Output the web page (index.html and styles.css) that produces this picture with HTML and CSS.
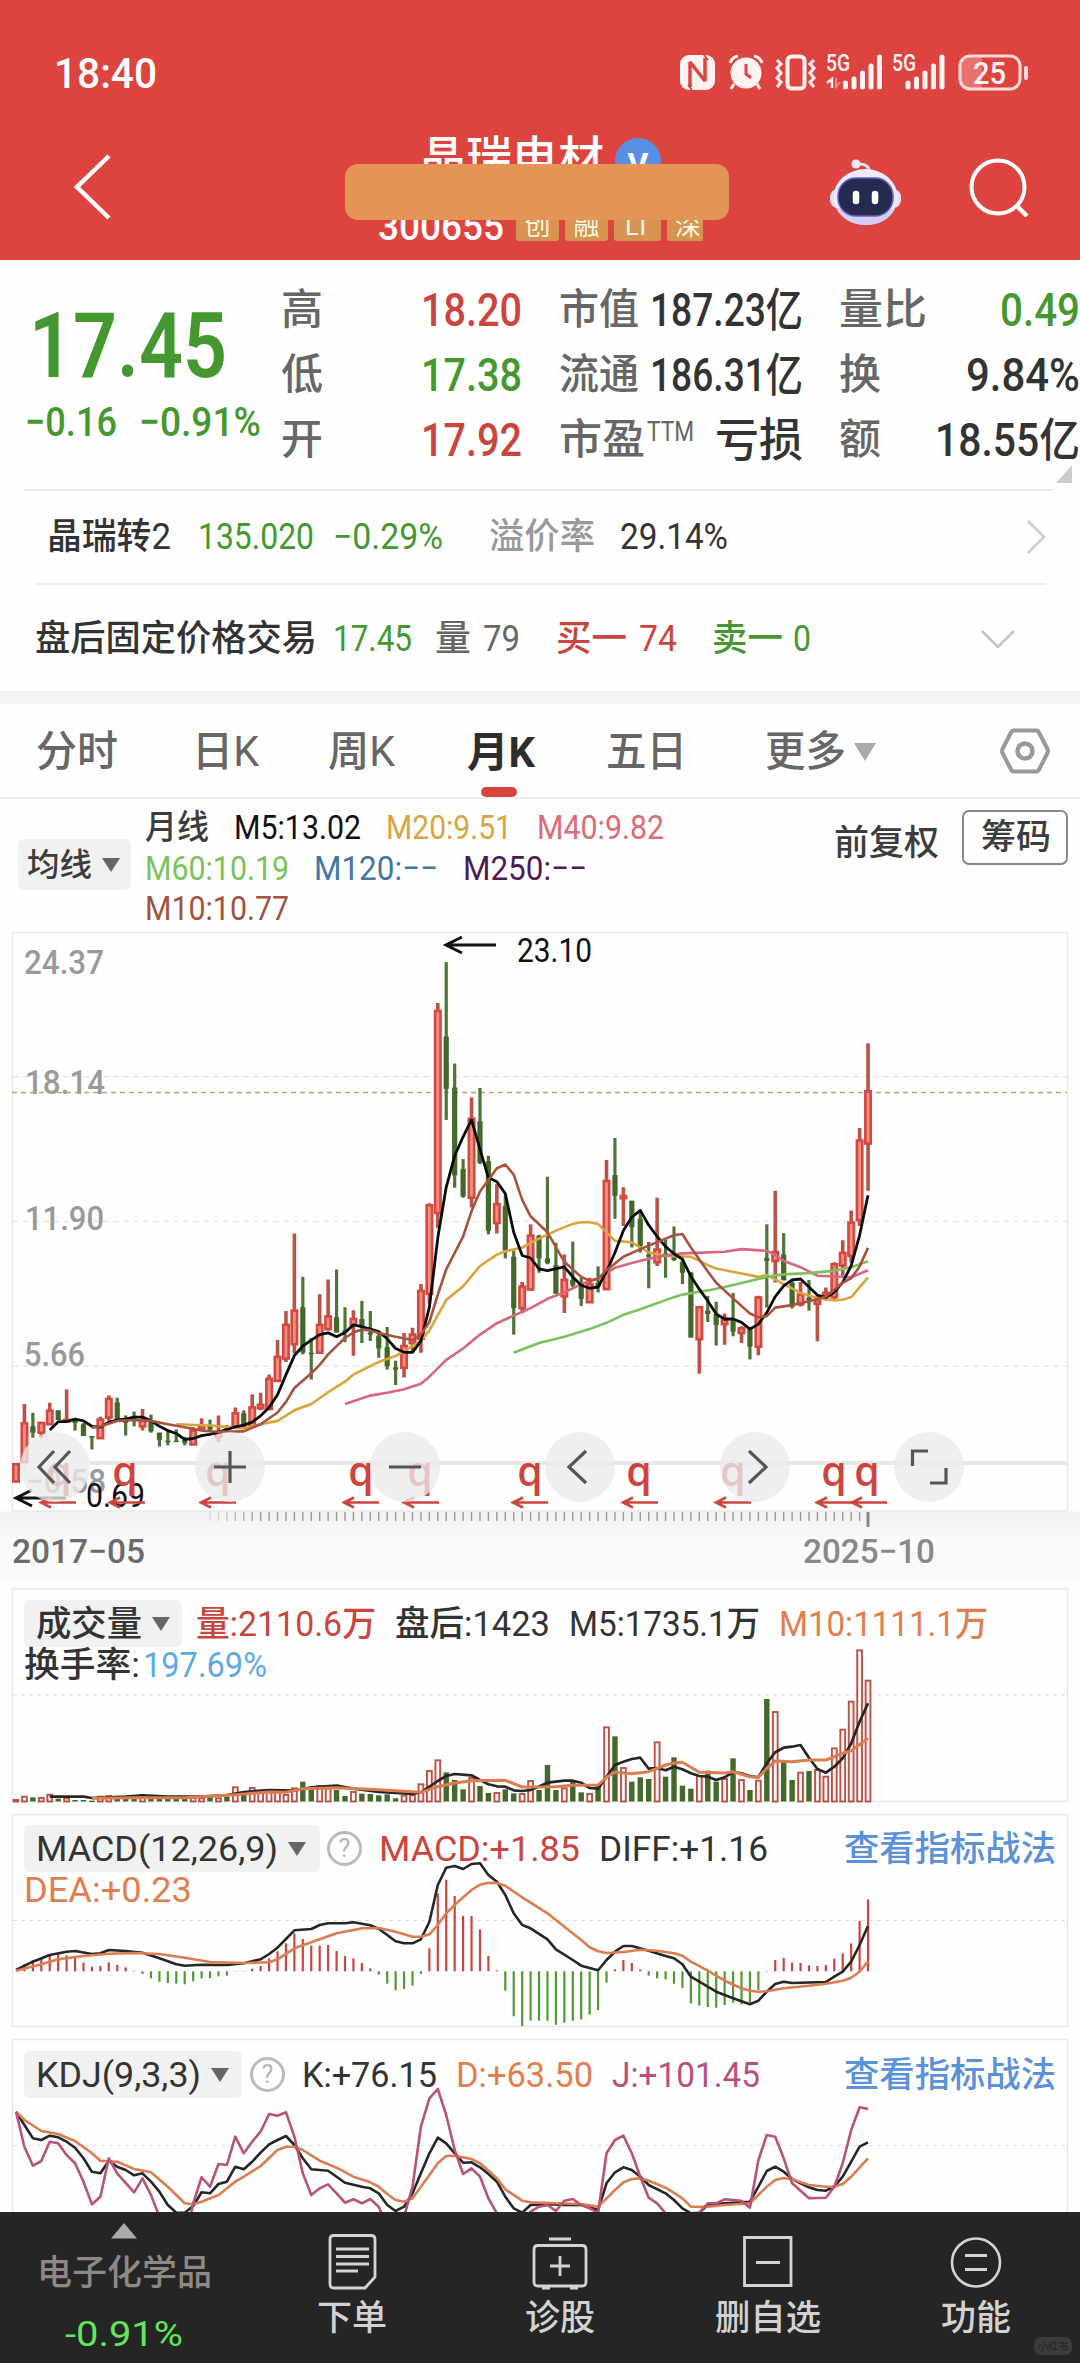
FILE: index.html
```html
<!DOCTYPE html>
<html lang="zh-CN">
<head>
<meta charset="utf-8">
<title>晶瑞电材 300655</title>
<link rel="stylesheet" href="styles.css">
</head>
<body>
<header class="top">
  <div class="status">
    <span class="fit clock" data-w="103">18:40</span>
    <svg class="status-icons" width="370" height="50" viewBox="0 0 370 50">
      <rect x="10" y="8" width="35" height="35" rx="9" fill="#fff3f1"/>
      <path d="M20 40V15L35 34V11" fill="none" stroke="#dd4440" stroke-width="3.500" stroke-linejoin="bevel"/>
      <path d="M22 43L18 38M34 8l4 5" stroke="#dd4440" stroke-width="2"/>
      <circle cx="76" cy="26" r="15.500" fill="#fff3f1"/>
      <path d="M60 16q2-6 8-7M84 9q6 1 8 7M64 37l-3 5M87 37l3 5" fill="none" stroke="#fff3f1" stroke-width="3"/>
      <path d="M76 17v10l5 4" fill="none" stroke="#dd4440" stroke-width="3"/>
      <rect x="117.500" y="9.500" width="17" height="32" rx="4" fill="none" stroke="#fff3f1" stroke-width="4"/>
      <path d="M107 13l4 4-4 4 4 5-4 5 4 4-4 5M144 13l-4 4 4 4-4 5 4 5-4 4 4 5" fill="none" stroke="#fff3f1" stroke-width="3"/>
      <text x="156" y="24" class="net" textLength="24" lengthAdjust="spacingAndGlyphs">5G</text>
      <path d="M157 36l5-4v9" fill="none" stroke="#fff3f1" stroke-width="2.500"/>
      <path d="M166 31v9l4-5" fill="none" stroke="#ea8d88" stroke-width="2"/>
      <path d="M175.500 40v-4M184 40V32M192.500 40V26M201 40V19M209.500 40V10" stroke="#fff3f1" stroke-width="5" stroke-linecap="round"/>
      <text x="222" y="24" class="net" textLength="24" lengthAdjust="spacingAndGlyphs">5G</text>
      <path d="M238 40v-4M246.500 40V32M255 40V26M263.500 40V19M272 40V10" stroke="#fff3f1" stroke-width="5" stroke-linecap="round"/>
      <path d="M312 9h-13a9 9 0 0 0-9 9v14a9 9 0 0 0 9 9h13z" fill="#e8726e"/>
      <rect x="290" y="9" width="60" height="33" rx="10" fill="none" stroke="#ffdcd9" stroke-width="3"/>
      <path d="M356 21v10" stroke="#ffdcd9" stroke-width="4" stroke-linecap="round"/>
      <text x="303" y="36.500" class="charge" textLength="33" lengthAdjust="spacingAndGlyphs">25</text>
    </svg>
  </div>
  <div class="titlebar">
    <svg class="back" width="60" height="80" viewBox="0 0 60 80"><path d="M41 9L9 40l32 31" fill="none" stroke="#fff" stroke-width="4.500"/></svg>
    <div class="stock">
      <div class="name"><span class="fit" data-w="184">晶瑞电材</span><i class="vip">V</i></div>
      <div class="code"><span class="fit num" data-w="126">300655</span><i>创</i><i>融</i><i class="wide">LT</i><i class="cut">深</i></div>
      <div class="mask"></div>
    </div>
    <svg class="robot" width="80" height="80" viewBox="0 0 80 80">
      <path d="M46 20q0-9-12-8" fill="none" stroke="#ece6f5" stroke-width="3"/><circle cx="33" cy="12" r="4.500" fill="#ece6f5"/>
      <rect x="7" y="37" width="71" height="19" rx="8" fill="#e5e0f6"/>
      <ellipse cx="42.500" cy="45" rx="32" ry="28" fill="#eeeafa"/>
      <path d="M14 57q9 16 29 16t29-16z" fill="#d3cdf0"/>
      <rect x="15" y="26" width="55" height="38" rx="18" fill="#252b4f" stroke="#6a5bc4" stroke-width="1.500"/>
      <path d="M33 42v7M52 42v7" stroke="#fff" stroke-width="6.500" stroke-linecap="round"/>
    </svg>
    <svg class="search" width="66" height="66" viewBox="0 0 66 66"><circle cx="31" cy="31" r="26.500" fill="none" stroke="#fff" stroke-width="4"/><path d="M49 49l11 11" stroke="#fff" stroke-width="4.500"/></svg>
  </div>
</header>

<section class="quote">
  <div class="price">
    <span class="fit big" data-w="198">17.45</span>
    <div class="chg"><span class="fit" data-w="92">−0.16</span><span class="fit" data-w="122">−0.91%</span></div>
  </div>
  <dl class="facts">
    <dt><span class="fit" data-w="42">高</span></dt><dd class="up"><span class="fit" data-w="101">18.20</span></dd>
    <dt><span class="fit" data-w="80">市值</span></dt><dd><span class="fit" data-w="153">187.23亿</span></dd>
    <dt><span class="fit" data-w="88">量比</span></dt><dd class="down"><span class="fit" data-w="80">0.49</span></dd>
    <dt><span class="fit" data-w="42">低</span></dt><dd class="down"><span class="fit" data-w="101">17.38</span></dd>
    <dt><span class="fit" data-w="80">流通</span></dt><dd><span class="fit" data-w="153">186.31亿</span></dd>
    <dt><span class="fit" data-w="42">换</span></dt><dd><span class="fit" data-w="114">9.84%</span></dd>
    <dt><span class="fit" data-w="42">开</span></dt><dd class="up"><span class="fit" data-w="101">17.92</span></dd>
    <dt><span class="fit" data-w="86">市盈</span><span class="fit ttm" data-w="47">TTM</span></dt><dd><span class="fit" data-w="88">亏损</span></dd>
    <dt><span class="fit" data-w="42">额</span></dt><dd><span class="fit" data-w="145">18.55亿</span></dd>
  </dl>
</section>
<div class="corner"><svg width="16" height="18" viewBox="0 0 16 18"><path d="M16 0v18H0z" fill="#ccc"/></svg></div>

<section class="line bond">
  <span class="fit" data-w="124">晶瑞转2</span><span class="fit down" data-w="116">135.020</span><span class="fit down" data-w="110">−0.29%</span><span class="fit pale" data-w="106">溢价率</span><span class="fit" data-w="108">29.14%</span>
  <svg width="20" height="36" viewBox="0 0 20 36"><path d="M2 2l16 16L2 34" fill="none" stroke="#ccc" stroke-width="2.500"/></svg>
</section>
<section class="line after">
  <span class="fit" data-w="282">盘后固定价格交易</span><span class="fit down" data-w="79">17.45</span><span class="fit grey" data-w="36">量</span><span class="fit grey" data-w="37">79</span><span class="fit up" data-w="71">买一</span><span class="fit up" data-w="38">74</span><span class="fit down" data-w="71">卖一</span><span class="fit down" data-w="18">0</span>
  <svg width="36" height="20" viewBox="0 0 36 20"><path d="M2 2l16 16L34 2" fill="none" stroke="#c4c4c4" stroke-width="2.500"/></svg>
</section>
<div class="band"></div>

<nav class="tabs">
  <a><span class="fit" data-w="82">分时</span></a><a><span class="fit" data-w="67">日K</span></a><a><span class="fit" data-w="67">周K</span></a><a class="on"><span class="fit" data-w="68">月K</span></a><a><span class="fit" data-w="81">五日</span></a><a><span class="fit" data-w="81">更多</span><svg width="22" height="20" viewBox="0 0 22 20"><path d="M0 1h22L11 19z" fill="#aaa"/></svg></a>
  <svg width="52" height="48" viewBox="0 0 52 48"><path d="M15 3.500h22q2 0 3 2L48.500 22q1 2 0 4L40 42.500q-1 2-3 2H15q-2 0-3-2L3.500 26q-1-2 0-4L12 5.500q1-2 3-2z" fill="none" stroke="#999" stroke-width="4"/><circle cx="26" cy="24" r="7.500" fill="none" stroke="#999" stroke-width="4.500"/></svg>
</nav>

<section class="ma">
  <div class="pill"><span class="fit" data-w="65">均线</span><i class="tri"></i></div>
  <div class="legend">
    <div><span class="fit" data-w="64">月线</span><span class="fit k" data-w="127">M5:13.02</span><span class="fit y" data-w="126">M20:9.51</span><span class="fit p" data-w="127">M40:9.82</span></div>
    <div><span class="fit g" data-w="144">M60:10.19</span><span class="fit b" data-w="124">M120:−−</span><span class="fit v" data-w="124">M250:−−</span></div>
    <div><span class="fit r" data-w="144">M10:10.77</span></div>
  </div>
  <span class="fit adj" data-w="105">前复权</span>
  <button><span class="fit" data-w="70">筹码</span></button>
</section>

<section class="chart"><svg id="kline" width="1080" height="650" viewBox="0 0 1080 650"></svg></section>

<section class="panel vol">
  <svg id="volume" width="1080" height="230" viewBox="0 0 1080 230"></svg>
  <div class="info">
    <div class="row"><div class="pill"><span class="fit" data-w="106">成交量</span><i class="tri"></i></div><span class="fit up" data-w="180">量:2110.6万</span><span class="fit" data-w="155">盘后:1423</span><span class="fit" data-w="191">M5:1735.1万</span><span class="fit o" data-w="209">M10:1111.1万</span></div>
    <div class="row2"><span class="fit" data-w="116">换手率:</span><span class="fit sky" data-w="124">197.69%</span></div>
  </div>
</section>
<section class="panel macd">
  <svg id="macd" width="1080" height="220" viewBox="0 0 1080 220"></svg>
  <div class="info">
    <div class="row"><div class="pill"><span class="fit" data-w="242">MACD(12,26,9)</span><i class="tri"></i></div><i class="help">?</i><span class="fit up" data-w="201">MACD:+1.85</span><span class="fit" data-w="169">DIFF:+1.16</span><a class="fit link" data-w="212">查看指标战法</a></div>
    <div class="row2"><span class="fit o" data-w="168">DEA:+0.23</span></div>
  </div>
</section>
<section class="panel kdj">
  <svg id="kdj" width="1080" height="182" viewBox="0 0 1080 182"></svg>
  <div class="info">
    <div class="row"><div class="pill"><span class="fit" data-w="165">KDJ(9,3,3)</span><i class="tri"></i></div><i class="help">?</i><span class="fit" data-w="135">K:+76.15</span><span class="fit o" data-w="137">D:+63.50</span><span class="fit m" data-w="148">J:+101.45</span><a class="fit link" data-w="212">查看指标战法</a></div>
  </div>
</section>

<footer class="dock">
  <div class="sector"><svg width="28" height="16" viewBox="0 0 28 16"><path d="M14 0l13 15.500H1z" fill="#aaa"/></svg><span class="fit" data-w="175">电子化学品</span><span class="fit pct" data-w="118">-0.91%</span></div>
  <div class="act"><svg width="60" height="58" viewBox="0 0 60 58"><path d="M12 3.500h37q4 0 4 4V45l-10 11H12q-4 0-4-4V7.500q0-4 4-4zM14 17h33M14 24.500h33M14 32h33M14 39h22" fill="none" stroke="#d4d4d4" stroke-width="2.800"/></svg><span class="fit" data-w="70">下单</span></div>
  <div class="act"><svg width="60" height="58" viewBox="0 0 60 58"><path d="M8 13.500h44q4 0 4 4V50q0 4-4 4H8q-4 0-4-4V17.500q0-4 4-4zM19 7h22M12 56h8M40 56h8M30 24v20M20 34h20" fill="none" stroke="#d4d4d4" stroke-width="2.800"/></svg><span class="fit" data-w="70">诊股</span></div>
  <div class="act"><svg width="60" height="58" viewBox="0 0 60 58"><path d="M6.500 5.500h46.500v48H6.500zM18 30.500h24" fill="none" stroke="#d4d4d4" stroke-width="2.800"/></svg><span class="fit" data-w="106">删自选</span></div>
  <div class="act"><svg width="60" height="58" viewBox="0 0 60 58"><circle cx="30" cy="30.500" r="24" fill="none" stroke="#d4d4d4" stroke-width="2.600"/><path d="M19 23.500h22M19 37.500h22" stroke="#d4d4d4" stroke-width="2.800"/></svg><span class="fit" data-w="70">功能</span></div>
  <i class="mark">小红书</i>
</footer>
<script src="app.js"></script>
</body>
</html>
```
FILE: styles.css
```css
* { box-sizing: border-box; }
body { margin: 0; width: 1080px; height: 2363px; overflow: hidden; background: #fefefe; color: #333; font-family: Roboto, "Noto Sans CJK SC", sans-serif; font-size: 35px; font-weight: 450; line-height: 1; }
i { font-style: normal; }
svg { display: block; flex: none; }
.fit { display: inline-block; white-space: nowrap; transform-origin: 0 50%; flex: none; justify-self: start; }
.up { color: #c9453e; }
.down { color: #459830; }
.grey { color: #666; }
.pale { color: #999; }

.top { height: 260px; background: #dd4440; color: #fff; overflow: hidden; }
.status { height: 96px; padding: 47px 0 0 54px; display: flex; align-items: flex-start; }
.clock { font-size: 42px; font-weight: 500; line-height: 53px; }
.status-icons { margin-left: 513px; }
.net { font: 500 23px Roboto, sans-serif; fill: #fff3f1; }
.charge { font: 500 32px Roboto, sans-serif; fill: #fff3f1; }
.titlebar { height: 164px; display: grid; grid-template-columns: 68px 277px 384px 94px 144px 1fr; align-items: start; }
.back { grid-column: 2; margin-top: 51px; }
.stock { grid-column: 3; height: 164px; display: grid; grid-template-rows: 68px 77px; }
.name { grid-area: 1 / 1; display: flex; align-items: center; padding: 33px 0 0 75px; height: 90px; font-size: 46px; font-weight: 500; }
.vip { width: 46px; height: 46px; border-radius: 50%; margin-left: 11px; margin-top: 6px; background: #588fe5; font: 700 32px/52px Roboto, sans-serif; text-align: center; }
.code { grid-area: 2 / 1; align-self: end; display: flex; align-items: flex-end; padding-left: 33px; height: 50px; font-size: 38px; font-weight: 500; }
.code .fit { margin-right: 12px; line-height: 28px; }
.code i { width: 43px; height: 34px; margin-right: 6px; border-radius: 3px; background: #d79350; color: #fff8e0; font: 26px/34px "Noto Sans CJK SC", sans-serif; text-align: center; }
.code i.wide { width: 47px; }
.code i.cut { width: 36px; overflow: hidden; padding-left: 8px; border-radius: 3px 0 0 3px; text-align: left; }
.mask { grid-area: 1 / 1 / 3 / 2; z-index: 1; align-self: start; margin-top: 68px; height: 56px; border-radius: 13px; background: #e39556; }
.robot { grid-column: 5; margin-top: 56px; }
.search { grid-column: 6; margin-top: 60px; }

.quote { height: 205px; display: grid; grid-template-columns: 281px 799px; }
.price { padding-top: 41px; color: #459830; }
.big { display: block; margin-left: 29px; font-size: 91px; font-weight: 600; line-height: 90px; }
.chg { display: flex; gap: 22px; margin: 9px 0 0 25px; font-size: 41px; font-weight: 500; line-height: 44px; }
.facts { margin: 0; padding-top: 17px; display: grid; grid-template-columns: 100px 141px 174px 107px 96px 181px; grid-auto-rows: 65px; align-items: center; }
.facts dt { color: #666; font-size: 42px; display: flex; }
.facts dd { margin: 0; font-size: 46px; font-weight: 500; line-height: 60px; display: flex; justify-content: flex-end; }
.facts dt:nth-of-type(3n+2) { padding-left: 37px; }
.facts dt:nth-of-type(3n) { padding-left: 36px; }
.facts .ttm { font-size: 27px; font-weight: 400; margin-left: 2px; }
.corner { height: 26px; border-bottom: 2px solid #eaeaea; margin: 0 27px 0 24px; display: flex; justify-content: flex-end; }
.corner svg { margin-right: -19px; }

.line { font-size: 36px; align-items: center; }
.bond { display: grid; height: 94px; margin: 0 34px 0 36px; padding-left: 11px; border-bottom: 2px solid #eee; grid-template-columns: 151px 135px 156px 131px 1fr 20px; }
.after { display: grid; height: 106px; padding: 2px 0 0 35px; grid-template-columns: 298px 102px 48px 73px 83px 73px 81px 187px 1fr; }
.band { height: 13px; background: #f4f4f4; }

.tabs { height: 95px; border-bottom: 2px solid #eee; display: grid; grid-template-columns: 156px 136px 139px 139px 159px 234px 1fr; padding: 0 0 0 36px; align-items: center; color: #666; font-size: 42px; }
.tabs a { height: 93px; padding-top: 2px; display: flex; align-items: center; gap: 8px; }
.tabs .on { color: #2d2d2d; font-weight: 700; display: grid; grid-template-rows: 81px 10px; gap: 0; }
.tabs .on .fit { margin-top: 12px; }
.tabs .on::after { content: ""; width: 36px; height: 10px; margin-left: 14px; border-radius: 5px; background: #d5443d; }

.pill { background: #f1f1f1; border-radius: 6px; display: flex; align-items: center; flex: none; }
.tri { width: 0; height: 0; border: solid transparent; border-width: 14px 9px 0; border-top-color: #666; margin-left: 10px; }
.ma { height: 131px; display: grid; grid-template-columns: 18px 113px 14px 689px 128px 106px; color: #3c3c3c; }
.ma > .pill { grid-column: 2; height: 51px; margin-top: 40px; padding-left: 9px; font-size: 32px; }
.legend { grid-column: 4; padding-top: 8px; font-size: 34px; line-height: 40.500px; }
.legend div { display: flex; gap: 25px; height: 40.500px; }
.k { color: #111; }
.y { color: #d8a540; }
.p { color: #dc6a78; }
.g { color: #7bc25d; }
.b { color: #4176a6; }
.v { color: #4a1b58; }
.r { color: #a2523f; }
.o { color: #e07f4d; }
.m { color: #b94f7a; }
.sky { color: #5fa9e2; }
.adj { margin-top: 27px; }
.ma button { height: 55px; margin-top: 11px; padding: 0 0 0 17px; text-align: left; border: 2px solid #888; border-radius: 7px; background: none; font: inherit; color: inherit; }

.chart { height: 650px; background: linear-gradient(#fefefe 581px, #f2f2f2 582px, #fafafa 610px); }
.panel { display: grid; }
.panel > * { grid-area: 1 / 1; }
.vol { height: 230px; }
.macd { height: 220px; }
.kdj { height: 182px; overflow: hidden; }
.info { padding: 15px 24px 0 24px; }
.vol .info { padding-top: 20px; }
.kdj .info { padding-top: 21px; }
.row { height: 47px; display: flex; align-items: center; }
.row .pill { height: 47px; width: 158px; padding-left: 12px; margin-right: 14px; }
.row .fit { margin: 2px 19px 0 0; }
.row .pill .fit { margin-right: 0; }
.macd .pill { width: 296px; margin-right: 7px; }
.kdj .pill { width: 218px; margin-right: 8px; }
.help { width: 35px; height: 35px; border: 3px solid #bbb; border-radius: 50%; color: #b5b5b5; font: 25px/30px Roboto, sans-serif; text-align: center; flex: none; margin-right: 17px; }
.row .link { color: #5a91da; margin: 2px 0 0 auto; }
.row2 { height: 36px; display: flex; align-items: center; gap: 3px; }

.axis { font: 500 34px Roboto, sans-serif; fill: #999; }
.axis.ink { font-weight: 400; fill: #111; }
.mark-q { font: 600 41px "Open Sans", sans-serif; fill: #cc443d; }

.dock { height: 151px; background: #252525; color: #d2d2d2; display: grid; grid-template-columns: 248px 208px 208px 207px 209px; font-size: 35px; position: relative; }
.sector { display: grid; justify-items: center; grid-template-rows: 25px 52px 64px; padding: 11px 0 0 0; align-items: start; color: #8f8886; }
.sector .fit { justify-self: center; align-self: center; line-height: 36px; }
.sector .pct { color: #63e65b; margin-top: 5px; }
.act { display: grid; grid-template-rows: 60px 50px; justify-items: center; padding-top: 20px; align-items: start; }
.act .fit { justify-self: center; align-self: end; line-height: 36px; margin-bottom: 5px; }
.mark { position: absolute; right: 8px; bottom: 8px; width: 38px; height: 18px; border-radius: 7px; background: #3c3c3c; color: #222; font: 10px/18px "Noto Sans CJK SC", sans-serif; text-align: center; }
```
FILE: app.js
```js
// Condense each label to its column width.
document.querySelectorAll('.fit').forEach(el => {
  const range = document.createRange();
  range.selectNodeContents(el);
  const k = el.dataset.w / range.getBoundingClientRect().width;
  el.style.width = el.dataset.w + 'px';
  el.style.transform = `scaleX(${k})`;
});

const X = i => 16 + 8.436 * i;

// Monthly candles from 2017-05: direction, high, body top, body bottom, low.
const candles = `r 1293 1293 1334 1334|r 1150 1196 1288 1288|g 1171 1203 1218 1230|r 1195 1195 1218 1230|r 1147 1166 1198 1198|g 1165 1165 1188 1188|r 1115 1188 1188 1190|g 1188 1188 1195 1213|g 1195 1198 1226 1226|g 1226 1226 1230 1258|r 1180 1187 1231 1231|r 1130 1138 1182 1190|g 1135 1146 1187 1187|g 1177 1190 1195 1225|g 1168 1178 1190 1203|r 1162 1190 1203 1213|g 1175 1190 1215 1218|g 1218 1218 1235 1251|g 1213 1237 1240 1248|g 1210 1237 1240 1240|g 1228 1235 1243 1248|r 1205 1213 1246 1246|r 1184 1203 1208 1213|g 1187 1203 1210 1215|r 1177 1218 1228 1240|g 1200 1203 1210 1215|r 1158 1172 1204 1210|g 1165 1172 1204 1208|r 1127 1158 1203 1203|r 1123 1152 1160 1165|r 1080 1090 1162 1162|r 998 1038 1095 1095|r 929 962 1042 1050|r 745 928 1008 1030|g 848 920 1028 1032|g 993 1028 1032 1092|r 889 962 1028 1028|r 854 942 972 975|g 830 944 980 980|g 920 975 980 1003|r 927 948 962 1035|g 905 948 964 1005|g 929 980 985 1000|g 978 988 1018 1040|g 967 1015 1060 1068|g 1047 1063 1068 1105|r 981 1012 1064 1087|r 969 985 1005 1027|r 865 881 995 1028|r 673 678 888 912|r 197 216 696 732|g 100 277 401 475|g 341 398 607 636|g 568 592 657 660|r 422 472 660 683|g 399 478 577 580|g 560 573 738 747|r 628 675 720 745|g 655 680 785 804|g 785 800 922 985|r 860 871 922 934|r 723 750 878 878|g 748 750 804 838|g 610 804 815 818|g 767 820 888 888|r 795 855 894 934|g 764 855 868 872|g 850 862 900 917|r 850 865 908 908|g 823 862 870 885|r 570 620 877 877|g 518 606 655 710|r 635 656 661 727|g 667 667 730 778|g 696 710 775 790|g 765 795 800 875|r 660 783 813 822|g 760 792 796 850|g 728 795 808 810|g 803 812 838 865|g 836 838 992 992|r 918 920 996 1078|g 893 928 936 955|g 907 936 962 1011|r 935 950 960 1009|g 886 948 978 989|r 965 970 981 1005|g 968 970 1014 1044|r 893 897 1014 1034|g 723 803 810 921|r 643 789 810 861|g 744 795 856 856|g 856 862 919 923|r 860 890 913 918|g 855 897 904 928|r 891 904 912 1001|r 873 886 893 904|r 813 818 896 906|r 761 791 821 845|r 690 719 798 814|r 494 524 713 727|r 293 407 531 643`.split('|').map(s => s.split(' ').map((v, n) => n ? +v : v));

// Series are written as "index:value" knots.
const line = (pts, y, color, w = 2.6) =>
  `<polyline fill="none" stroke="${color}" stroke-width="${w}" stroke-linejoin="round" points="${pts.split(',').map(p => { const [i, v] = p.split(':').map(Number); return X(i).toFixed(1) + ' ' + y(v).toFixed(1); }).join(' ')}"/>`;
const arrow = (x1, x2, y, color, h = 4, w = 2.6) =>
  `<path d="M${x2} ${y}H${x1}M${x1 + h * 2} ${y - h}L${x1} ${y}l${h * 2} ${h}" fill="none" stroke="${color}" stroke-width="${w}"/>`;
const label = (x, y, text, w, cls = 'axis', fill = '') =>
  `<text x="${x}" y="${y}" class="${cls}" textLength="${w}" lengthAdjust="spacingAndGlyphs"${fill && ` fill="${fill}" style="fill:${fill}"`}>${text}</text>`;

// K-line chart
{
  const y = v => v * 0.4209 - 10;
  let s = '<path d="M12.500 581V2.500H1067.500V581" fill="none" stroke="#e9e9e9" stroke-width="1.500"/><path d="M12 581H1067" stroke="#e2e2e2"/>';
  for (const v of [372, 716, 1060]) s += `<path d="M13 ${y(v)}H1067" stroke="#dedede" stroke-width="1" stroke-dasharray="6 4"/>`;
  s += `<path d="M90 ${y(1290)}H1067" stroke="#e8e8e8" stroke-width="4"/>`;
  s += label(24, 44, '24.37', 80) + label(25, 164, '18.14', 80) + label(25, 300, '11.90', 79) + label(24, 436, '5.66', 61) + label(26, 563, '−0.58', 80);
  s += `<path d="M12 ${y(410)}H1067" stroke="#b3aa72" stroke-width="1.500" stroke-dasharray="5 4"/>`;
  candles.forEach(([c, h, t, b, l], i) => {
    const x = X(i), top = y(t), ht = Math.max(y(b) - top, 1.5);
    if (c === 'r') {
      s += `<path d="M${x} ${y(h)}V${top}M${x} ${top + ht}V${Math.max(y(l), top + ht)}" stroke="#b9534a" stroke-width="3.600"/>`;
      s += `<rect x="${x - 2.7}" y="${top}" width="5.400" height="${ht}" fill="#ee8f84" stroke="#d4483f" stroke-width="2.600"/>`;
    } else {
      s += `<path d="M${x} ${y(h)}V${y(l)}" stroke="#4e7538" stroke-width="3.200"/><rect x="${x - 2.6}" y="${top}" width="5.200" height="${ht}" fill="#43682a"/>`;
    }
  });
  s += line('19:1198,23:1201,27:1208,29:1198,31:1190,33:1165,35:1150,37:1122,39:1097,40:1080,43:1050,45:1036,48:1000,49:975,51:903,53:870,55:822,57:795,58:787,60:778,62:757,64:738,66:722,67:718,68:718,69:722,70:742,71:762,73:766,75:790,77:798,80:800,82:820,83:828,86:840,88:848,89:843,91:865,93:886,95:898,97:903,98:902,99:896,101:849', y, '#daa43c');
  s += line('39:1150,42:1130,44:1123,46:1115,48:1102,49:1085,51:1045,53:1018,55:985,57:958,59:940,61:922,63:900,65:885,67:865,69:852,71:826,73:815,75:805,77:797,79:792,84:788,86:782,89:786,90:796,91:810,93:825,95:845,99:849,101:832', y, '#d9667c');
  s += line('59:1028,62:1005,65:990,68:972,70:957,72:938,74:925,77:903,79:890,82:880,84:872,87:858,89:848,91:842,94:839,97:833,99:825,101:811', y, '#7cc25c');
  s += line('4:1212,5:1192,6:1192,7:1186,8:1190,9:1203,10:1205,11:1193,12:1188,13:1186,14:1181,15:1181,16:1190,17:1203,18:1213,19:1220,20:1234,21:1232,22:1225,23:1222,25:1211,26:1204,27:1200,28:1193,29:1178,30:1158,31:1128,32:1080,33:1035,34:1012,35:998,36:985,37:981,38:990,39:980,40:962,41:966,42:972,43:978,44:995,45:1018,46:1027,47:1027,48:1000,49:920,50:755,51:635,52:560,53:515,54:475,55:545,56:612,57:622,58:650,59:742,60:797,61:803,62:829,63:833,65:824,66:848,67:868,68:875,69:872,70:835,71:790,72:738,73:706,74:690,75:725,76:752,77:776,78:793,79:806,80:847,81:877,82:905,83:936,84:948,85:948,86:956,87:972,88:960,89:933,90:895,91:869,92:855,93:853,94:872,95:891,96:897,97:884,98:861,99:821,100:749,101:654', y, '#0c0c0c', 2.8);
  s += line('9:1206,10:1203,12:1190,14:1188,16:1190,18:1198,20:1205,22:1213,24:1216,27:1215,29:1198,31:1170,32:1145,33:1112,35:1077,36:1057,37:1032,39:993,40:980,41:973,42:975,43:981,45:990,47:998,48:985,49:955,50:890,51:830,53:752,54:692,55:645,57:590,58:581,59:605,60:665,61:704,63:742,65:812,67:848,68:857,69:852,70:832,72:800,74:782,77:757,78:749,79:746,80:778,82:835,83:862,85:899,87:935,88:944,89:941,90:921,92:915,94:906,96:895,98:862,99:851,100:823,101:779', y, '#a8523f');
  s += arrow(446, 496, 15, '#111', 8, 3) + label(517, 32, '23.10', 75, 'axis ink');
  s += arrow(16, 66, 568, '#111', 8, 3) + label(86, 577, '0.69', 59, 'axis ink');
  for (const q of [59, 125, 218, 361, 420, 530, 639, 733, 834, 867])
    s += `<text x="${q}" y="556" text-anchor="middle" class="mark-q">q</text>`;
  for (const a of [41, 110, 201, 344, 404, 513, 623, 716, 817, 852]) s += arrow(a, a + 35, 572.5, '#cc443d', 5);
  for (const c of [55, 230, 405, 580, 755, 929]) s += `<circle cx="${c}" cy="537" r="35" fill="#ebebeb" opacity="0.78"/>`;
  s += '<path d="M54 521L39 537l15 16M70 521L55 537l15 16M214 537h32M230 521v32M389 537h32M586 521l-17 16 17 16M749 521l17 16-17 16M912.500 536V521H928M930 553h16V538" fill="none" stroke="#555" stroke-width="3.200"/>';
  for (let i = 23; i < 101; i++) s += `<path d="M${X(i)} 582v9" stroke="#999" stroke-width="1.400" opacity="${Math.min(1, (i - 21) / 8)}"/>`;
  s += '<path d="M868 582v15" stroke="#888" stroke-width="3"/>';
  s += label(12, 633, '2017−05', 133, 'axis', '#6b6b6b') + label(803, 633, '2025−10', 132, 'axis', '#888');
  document.getElementById('kline').innerHTML = s;
}

const y3 = v => v / 3;
const frame = (t, b, mid) => `<rect x="12.500" y="${t}" width="1055" height="${b - t}" fill="#fefefe" stroke="#e9e9e9" stroke-width="1.500"/><path d="M13 ${mid}H1067" stroke="#dedede" stroke-width="1.200" stroke-dasharray="4 4"/>`;

// Volume
{
  const tops = [660,650,652,654,644,656,655,660,660,662,650,648,652,655,650,645,655,655,655,655,655,653,655,652,655,650,622,645,624,638,636,636,645,625,605,628,618,625,630,648,636,641,642,646,643,655,647,646,613,573,541,577,600,628,594,618,639,639,628,640,642,603,630,555,630,625,605,637,642,615,442,469,564,605,592,597,487,590,532,617,626,588,572,605,597,535,600,630,602,357,396,545,600,578,573,570,590,505,449,365,211,302];
  let s = frame(9, 221.5, 115);
  tops.forEach((t, i) => {
    const x = X(i), h = Math.max(221.5 - t / 3, 1.5);
    s += candles[i][0] === 'r'
      ? `<rect x="${x - 2.4}" y="${t / 3}" width="4.800" height="${h}" fill="#fff3f1" stroke="#b9534a" stroke-width="1.900"/>`
      : `<rect x="${x - 2.7}" y="${t / 3}" width="5.400" height="${h}" fill="#43682a"/>`;
  });
  s += line('4:650,8:650,9:654,11:652,13:650,15:646,18:650,22:650,25:645,27:636,30:630,33:632,35:622,38:617,40:626,43:636,47:642,48:637,50:603,51:588,52:582,54:586,55:600,56:613,57:619,58:620,59:631,60:633,61:630,63:608,65:602,66:602,67:608,68:624,69:626,70:590,71:555,72:545,73:537,74:533,75:566,76:564,77:571,78:560,79:568,80:580,81:588,82:590,83:600,84:592,85:576,86:580,87:588,88:592,89:550,90:517,91:503,92:500,93:495,94:533,95:567,96:578,97:560,98:535,99:490,100:425,101:370', y3, '#262626', 2.7);
  s += line('9:655,14:653,20:653,26:644,30:636,32:637,34:626,38:623,42:628,48:637,50:620,52:609,54:602,58:601,60:621,64:620,66:616,69:615,70:592,71:577,73:581,75:575,77:555,78:549,79:547,80:562,81:577,84:579,85:575,87:590,88:592,89:565,90:543,92:545,94:540,96:540,98:520,99:512,101:475', y3, '#dd7c4e', 3);
  document.getElementById('volume').innerHTML = s;
}

// MACD
{
  const bars = [484,462,450,442,434,432,436,442,458,470,468,457,465,472,482,492,505,515,519,521,523,514,505,504,499,497,485,483,476,468,445,424,400,370,387,407,407,405,423,438,445,459,475,494,521,541,537,527,492,415,250,210,258,318,318,358,438,481,542,619,648,632,632,632,644,638,632,629,614,600,518,478,450,459,478,497,505,508,521,534,580,587,591,593,585,578,583,580,540,485,450,444,458,459,466,468,465,446,430,400,333,268];
  let s = frame(4.5, 216.5, 110.5);
  bars.forEach((v, i) => { s += `<path d="M${X(i)} 161.300V${v / 3}" stroke="${v < 484 ? '#c8463f' : '#4f9a34'}" stroke-width="2.200"/>`; });
  s += line('0:480,2:455,4:435,6:425,7:423,9:432,10:430,11:420,13:423,15:428,17:445,19:463,20:467,22:464,25:465,27:460,29:448,30:432,31:413,32:387,33:361,35:357,36:345,37:340,39:340,40:337,42:346,43:356,44:375,45:394,46:400,47:400,48:388,49:335,50:225,51:173,52:168,53:177,54:162,55:160,56:195,57:215,58:255,59:310,60:345,61:355,63:388,64:418,66:450,67:467,69:481,70:450,71:425,72:408,73:408,75:422,77:438,78:445,79:463,80:500,82:530,83:545,85:565,87:583,88:572,89:545,90:522,91:515,92:519,96:516,97:500,98:485,99:455,100:405,101:348', y3, '#262626');
  s += line('0:482,3:463,5:448,8:438,11:431,14:429,17:432,20:443,23:456,27:459,30:457,31:448,33:415,36:388,38:370,40:360,41:355,43:354,45:365,47:380,48:380,49:373,50:345,51:310,52:285,53:262,54:240,55:224,56:218,57:219,58:227,60:262,63:310,65:350,67:390,68:412,69:424,70:429,72:426,74:419,76:422,78:430,79:437,80:455,82:482,84:512,86:535,87:542,88:545,89:544,91:535,94:527,96:521,98:512,99:503,100:485,101:455', y3, '#dd7c4e');
  document.getElementById('macd').innerHTML = s;
}

// KDJ
{
  let s = frame(9.5, 230, 115.5);
  s += line('0:245,1:285,2:325,3:330,4:317,5:322,6:335,7:353,8:385,9:425,10:430,11:392,12:410,13:420,14:436,15:430,16:455,17:485,18:525,19:548,20:548,21:528,22:487,23:490,24:462,25:455,26:410,27:418,28:395,29:368,30:343,31:330,32:318,33:345,34:385,35:418,37:422,38:440,39:458,41:470,42:475,43:490,44:525,45:543,46:530,47:490,48:430,49:370,50:323,51:340,52:370,53:398,54:397,55:412,56:432,57:455,58:500,59:535,60:548,61:525,63:523,65:525,67:525,68:532,69:540,70:460,71:427,72:412,73:420,74:440,75:465,77:490,78:510,79:535,80:550,81:548,82:525,84:520,87:515,88:470,89:423,90:410,91:425,92:447,93:460,94:472,95:480,96:482,97:470,98:440,99:395,100:350,101:337', y3, '#262626');
  s += line('0:245,1:270,3:303,5:312,7:333,9:370,10:392,12:395,14:417,16:427,18:470,19:495,20:520,21:523,22:515,24:495,26:455,27:440,29:408,31:360,32:350,33:350,34:360,36:392,38:413,40:440,42:457,43:470,44:492,45:510,46:515,47:505,48:470,49:435,50:400,51:378,52:377,54:387,55:400,57:445,58:478,60:512,61:517,64:520,67:522,69:530,70:505,71:480,72:457,73:447,74:445,75:452,77:473,79:505,80:530,82:530,84:525,87:520,88:495,89:470,90:450,91:444,92:448,94:465,96:470,97:470,98:462,99:440,101:385', y3, '#dd7c4e');
  s += line('0:245,1:350,2:407,3:393,4:335,5:340,6:375,7:400,8:455,9:523,10:500,11:385,12:430,14:487,15:445,16:495,17:560,20:640,21:520,22:442,23:470,24:402,25:405,26:320,27:370,28:335,29:305,30:252,31:257,32:247,33:320,34:430,35:495,36:475,37:463,38:490,39:518,40:508,41:520,42:507,43:530,44:590,45:590,46:560,47:470,48:290,49:205,50:177,51:255,52:360,53:432,54:415,55:440,56:505,57:550,58:600,60:580,61:545,62:530,63:525,64:543,65:512,66:507,67:525,68:535,69:548,70:370,71:330,72:317,73:370,74:440,75:503,76:520,77:550,78:590,80:570,81:548,82:520,83:520,84:508,86:512,87:533,88:390,89:315,90:320,91:385,92:460,94:505,96:503,97:470,98:400,99:300,100:232,101:237', y3, '#b8527c');
  document.getElementById('kdj').innerHTML = s;
}
```
